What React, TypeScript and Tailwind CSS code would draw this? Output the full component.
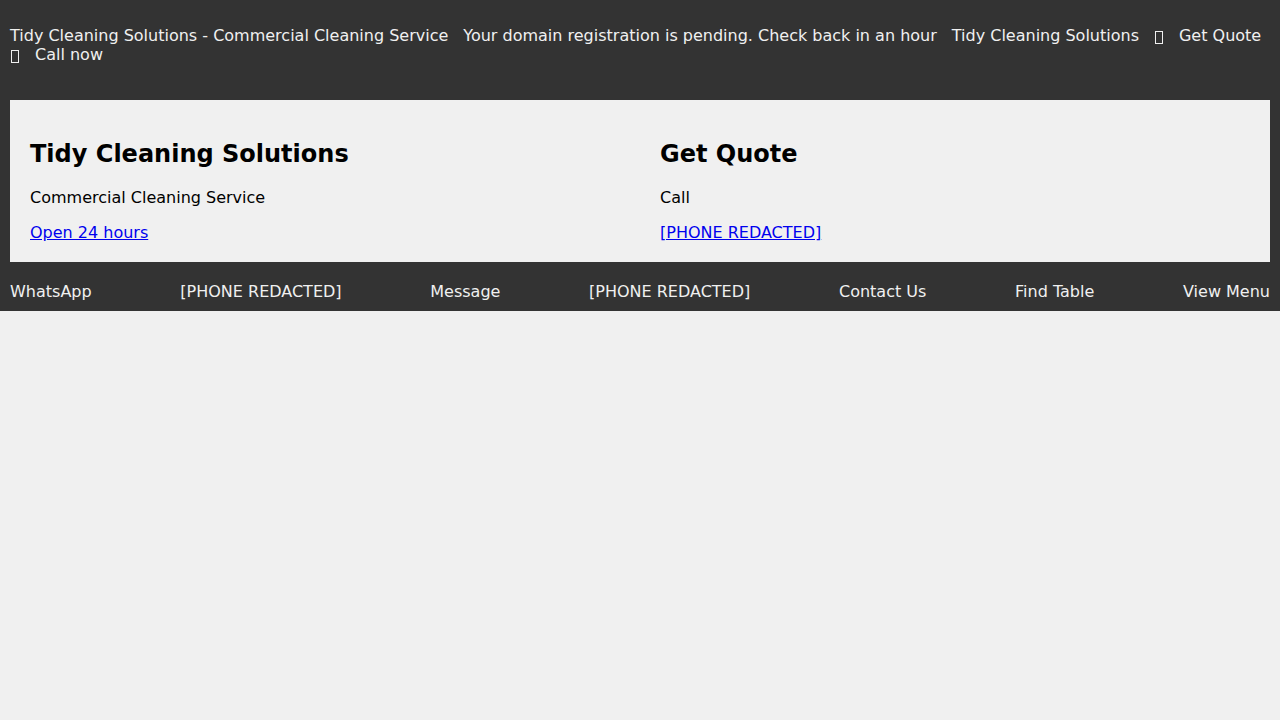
import React from "react";

function Tofu() {
  return (
    <span className="inline-flex w-[10px] items-center justify-start">
      <span className="ml-px mt-[3px] inline-block h-[13px] w-[8px] border border-[#f0f0f0]" />
    </span>
  );
}

export default function App() {
  const nav = [
    "WhatsApp",
    "[PHONE REDACTED]",
    "Message",
    "[PHONE REDACTED]",
    "Contact Us",
    "Find Table",
    "View Menu",
  ];
  return (
    <div className="min-h-screen bg-[#f0f0f0] font-['DejaVu_Sans',sans-serif] text-[16px] leading-[normal]">
      <div className="bg-[#333333] p-[10px] text-[#f0f0f0]">
        <div className="mt-[16px] mb-[36px] flex flex-wrap gap-x-[15px]">
          <span>Tidy Cleaning Solutions - Commercial Cleaning Service</span>
          <span>Your domain registration is pending. Check back in an hour</span>
          <span>Tidy Cleaning Solutions</span>
          <Tofu />
          <span>Get Quote</span>
          <Tofu />
          <span>Call now</span>
        </div>
        <div className="grid grid-cols-2 bg-[#f0f0f0] text-black">
          <div className="p-[20px]">
            <h2 className="mt-[20px] mb-[20px] text-[24px] font-bold">Tidy Cleaning Solutions</h2>
            <p className="mb-[16px]">Commercial Cleaning Service</p>
            <a href="#" className="text-[#0000ee] underline">Open 24 hours</a>
          </div>
          <div className="p-[20px]">
            <h2 className="mt-[20px] mb-[20px] text-[24px] font-bold">Get Quote</h2>
            <p className="mb-[16px]">Call</p>
            <a href="#" className="text-[#0000ee] underline">[PHONE REDACTED]</a>
          </div>
        </div>
        <div className="mt-[20px] flex justify-between">
          {nav.map((n, i) => (
            <span key={i}>{n}</span>
          ))}
        </div>
      </div>
    </div>
  );
}
